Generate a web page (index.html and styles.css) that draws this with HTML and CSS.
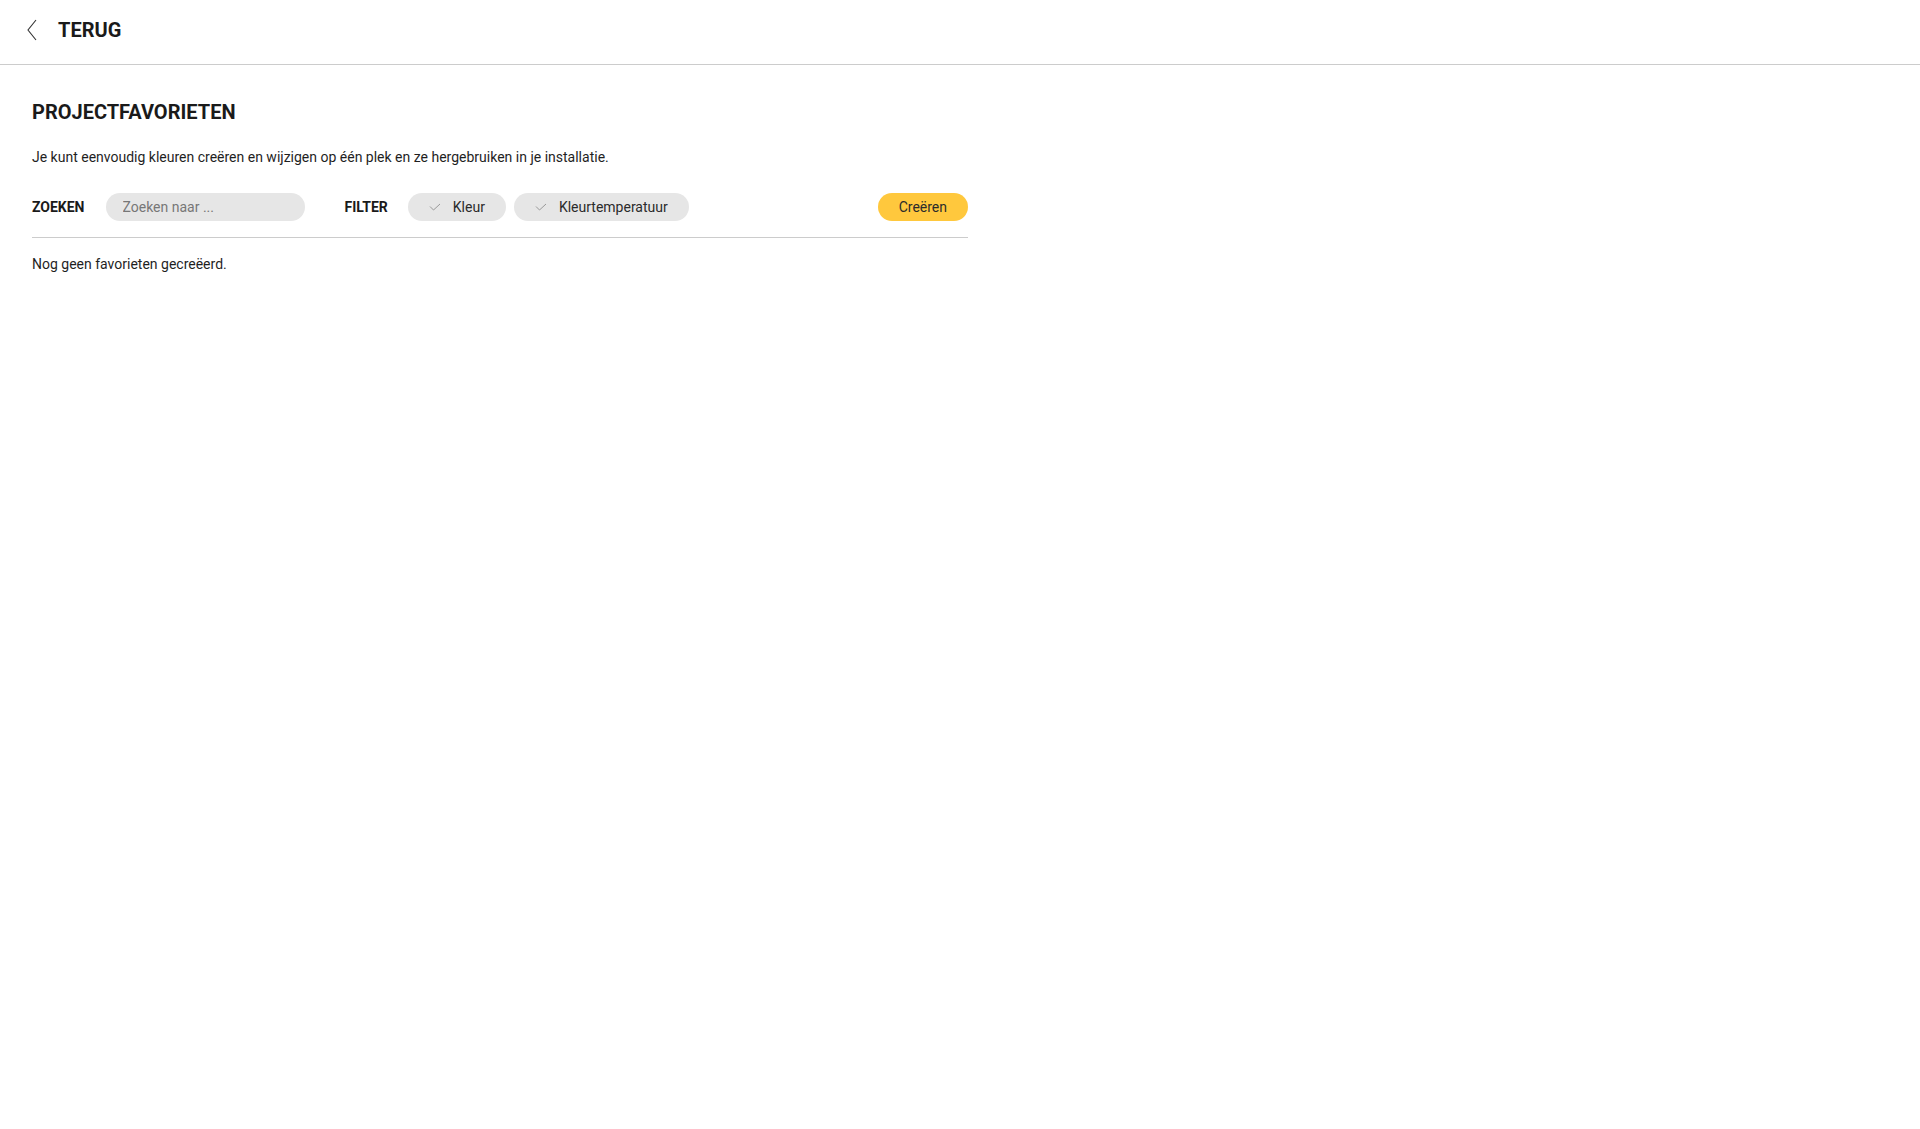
FILE: index.html
```html
<!DOCTYPE html>
<html lang="nl">
<head>
    <meta charset="UTF-8">
    <meta name="viewport" content="width=device-width, initial-scale=1.0">
    <link rel="stylesheet" href="styles.css">
    <title>Projectfavorieten</title>
</head>
<body>
    <header class="topbar">
        <a class="back" href="#">
            <svg class="back-icon" width="10" height="22" viewBox="0 0 10 22">
                <polyline points="9,1 1,11 9,21" fill="none" stroke="#333" stroke-width="1.1"/>
            </svg>
            <span>TERUG</span>
        </a>
    </header>

    <main class="content">
        <h1>PROJECTFAVORIETEN</h1>
        <p class="intro">Je kunt eenvoudig kleuren creëren en wijzigen op één plek en ze hergebruiken in je installatie.</p>

        <div class="toolbar">
            <label class="label" for="search">ZOEKEN</label>
            <input id="search" class="search" type="text" placeholder="Zoeken naar ...">

            <span class="label filter-label">FILTER</span>
            <button class="chip">
                <svg class="check" width="12" height="8" viewBox="0 0 12 8">
                    <polyline points="1,3.5 4.5,7 11,1" fill="none" stroke="#999" stroke-width="1"/>
                </svg>
                Kleur
            </button>
            <button class="chip">
                <svg class="check" width="12" height="8" viewBox="0 0 12 8">
                    <polyline points="1,3.5 4.5,7 11,1" fill="none" stroke="#999" stroke-width="1"/>
                </svg>
                Kleurtemperatuur
            </button>

            <button class="btn-create">Creëren</button>
        </div>

        <p class="empty">Nog geen favorieten gecreëerd.</p>
    </main>
</body>
</html>
```

FILE: styles.css
```css
body {
    margin: 0;
    padding: 0;
    background-color: #fff;
    font-family: Roboto, "Liberation Sans", sans-serif;
    color: #1f1f1f;
}

.topbar {
    height: 65px;
    box-sizing: border-box;
    padding: 0 0 4px 27px;
    display: flex;
    align-items: center;
    border-bottom: 1px solid #cccccc;
}

.back {
    display: flex;
    align-items: center;
    gap: 21px;
    text-decoration: none;
    color: #1a1a1a;
    font-size: 20px;
    font-weight: 700;
    line-height: 24px;
}

.back-icon {
    display: block;
}

.content {
    width: 936px;
    padding: 35px 0 0 32px;
}

h1 {
    margin: 0;
    font-size: 20px;
    line-height: 24px;
    font-weight: 700;
    color: #1a1a1a;
}

.intro {
    margin: 23px 0 0;
    font-size: 14px;
    line-height: 20px;
}

.toolbar {
    display: flex;
    align-items: center;
    margin-top: 26px;
    padding-bottom: 16px;
    border-bottom: 1px solid #cccccc;
}

.label {
    font-size: 14px;
    font-weight: 700;
    color: #1a1a1a;
}

.search {
    width: 199px;
    height: 28px;
    box-sizing: border-box;
    margin-left: 21px;
    padding: 0 17px;
    border: none;
    border-radius: 14px;
    background-color: #e6e6e6;
    font-family: inherit;
    font-size: 14px;
    color: #333;
    outline: none;
}

.search::placeholder {
    color: #777;
}

.filter-label {
    margin-left: 40px;
    margin-right: 20px;
}

.chip {
    display: flex;
    align-items: center;
    gap: 12px;
    height: 28px;
    margin-right: 8px;
    padding: 0 21px 0 21px;
    border: none;
    border-radius: 14px;
    background-color: #e6e6e6;
    font-family: inherit;
    font-size: 14px;
    color: #2b2b2b;
    cursor: pointer;
}

.check {
    display: block;
}

.btn-create {
    margin-left: auto;
    height: 28px;
    padding: 0 21px;
    border: none;
    border-radius: 14px;
    background-color: #ffc83d;
    font-family: inherit;
    font-size: 14px;
    color: #2b2b2b;
    cursor: pointer;
}

.empty {
    margin: 16px 0 0;
    font-size: 14px;
    line-height: 20px;
}
```
